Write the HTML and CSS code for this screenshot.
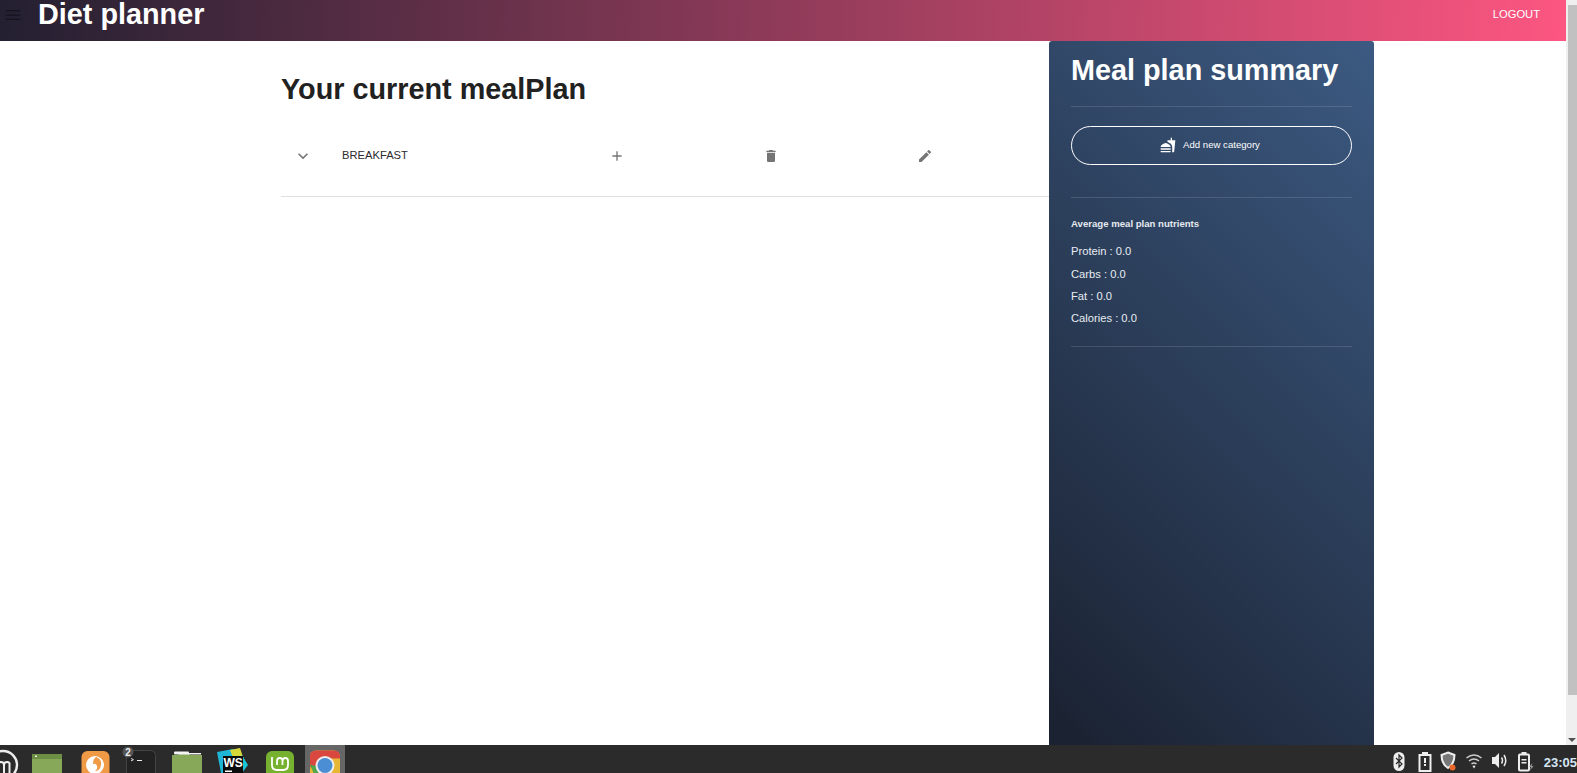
FILE: index.html
```html
<!DOCTYPE html>
<html lang="en">
<head>
    <meta charset="UTF-8">
    <title>Diet planner</title>
    <link rel="stylesheet" href="styles.css">
</head>
<body>

    <div class="window">
        <div class="page">
            <header class="app-bar">
                <svg class="menu-icon" viewBox="0 0 24 24"><path d="M3 18h18v-1.500H3V18zm0-5.250h18v-1.500H3v1.500zM3 6v1.500h18V6H3z"/></svg>
                <h1 class="app-title">Diet planner</h1>
                <span class="logout">LOGOUT</span>
            </header>

            <div class="content">
                <main class="plan">
                    <h2 class="plan-title">Your current mealPlan</h2>
                    <div class="category-row">
                        <svg class="row-icon chevron" viewBox="0 0 24 24"><path d="M16.59 8.59L12 13.17 7.41 8.59 6 10l6 6 6-6z"/></svg>
                        <span class="category-name">BREAKFAST</span>
                        <span class="action"><svg class="row-icon" viewBox="0 0 24 24"><path d="M19 13h-6v6h-2v-6H5v-2h6V5h2v6h6v2z"/></svg></span>
                        <span class="action"><svg class="row-icon" viewBox="0 0 24 24"><path d="M6 19c0 1.100.9 2 2 2h8c1.100 0 2-.9 2-2V7H6v12zM19 4h-3.500l-1-1h-5l-1 1H5v2h14V4z"/></svg></span>
                        <span class="action"><svg class="row-icon" viewBox="0 0 24 24"><path d="M3 17.250V21h3.750L17.810 9.940l-3.750-3.750L3 17.250zM20.710 7.040c.39-.39.39-1.020 0-1.410l-2.340-2.340c-.39-.39-1.020-.39-1.410 0l-1.830 1.830 3.750 3.750 1.830-1.830z"/></svg></span>
                    </div>
                </main>

                <aside class="summary">
                    <h2 class="summary-title">Meal plan summary</h2>
                    <hr class="divider">
                    <button class="add-btn">
                        <svg class="add-icon" viewBox="0 0 24 24"><path d="M18.060 22.990h1.660c.84 0 1.530-.64 1.630-1.460L23 5.050h-5V1h-1.970v4.050h-4.970l.3 2.340c1.710.47 3.310 1.320 4.340 2.330 1.540 1.520 2.600 3.090 2.600 5.650v8.620zM1 21.990V21h15.030v.99c0 .56-.45 1.010-1.020 1.010H2.010c-.56 0-1.010-.45-1.010-1.010zm15.030-7c0-4-7.520-6-7.520-6S1 11 1 15h15.030zM1.020 17h15v2h-15z"/></svg>
                        Add new category
                    </button>
                    <hr class="divider divider-btn">
                    <h3 class="nutrients-title">Average meal plan nutrients</h3>
                    <p class="nutrient first">Protein : 0.0</p>
                    <p class="nutrient">Carbs : 0.0</p>
                    <p class="nutrient">Fat : 0.0</p>
                    <p class="nutrient">Calories : 0.0</p>
                    <hr class="divider divider-end">
                </aside>
            </div>
        </div>

        <div class="scrollbar">
            <div class="thumb"></div>
            <div class="arrow"></div>
        </div>
    </div>

    <footer class="taskbar">
        <div class="launchers">
            <span class="launcher mint-menu">
                <svg viewBox="0 0 40 28"><circle cx="3" cy="20" r="14" fill="none" stroke="#eee" stroke-width="2.400"/><path d="M-2 28v-8q0-3 3-3t3 3v8M4 20q0-3 3-3t2.500 3v8" fill="none" stroke="#eee" stroke-width="2"/></svg>
            </span>
            <span class="launcher">
                <svg viewBox="0 0 46 28"><rect x="8" y="9" width="30" height="19" fill="#87a858"/><rect x="8" y="9" width="30" height="5" fill="#6d8f45"/><rect x="11" y="10.500" width="2" height="1.500" fill="#e8eedd"/></svg>
            </span>
            <span class="launcher">
                <svg viewBox="0 0 46 28"><rect x="10.500" y="6" width="28" height="28" rx="6" fill="#f19a46"/><circle cx="24" cy="20" r="9" fill="#fff"/><path d="M25 12q6 2 5 8t-6 6q3-2 2-5t-4-2q0-5 3-7z" fill="#f19a46"/></svg>
            </span>
            <span class="launcher">
                <svg viewBox="0 0 46 28"><rect x="9.500" y="5.500" width="29" height="28" rx="5" fill="#222" stroke="#444"/><path d="M14 13.500l2.500 1.200-2.500 1.200" fill="none" stroke="#ddd"/><rect x="20" y="15" width="5" height="1" fill="#eee"/><circle cx="11" cy="7" r="5.500" fill="#555"/><text class="badge-num" x="11" y="10.500">2</text></svg>
            </span>
            <span class="launcher">
                <svg viewBox="0 0 46 28"><path d="M8 10h6l2-2h8l2 2h12v18H8z" fill="#87a858"/><rect x="10" y="6.500" width="15" height="3" rx="1" fill="#f4f4f4"/><rect x="24" y="8" width="13" height="1.500" fill="#f4f4f4"/></svg>
            </span>
            <span class="launcher">
                <svg viewBox="0 0 46 28"><path d="M7 7l16-3 4 6-4 18H11z" fill="#1fb5d6"/><path d="M20 5l10-2 4 12-9 3z" fill="#d6d83a"/><path d="M32 10l6 10-6 8H20z" fill="#19c3d8"/><rect x="13" y="11" width="20" height="19" fill="#0b0b0b"/><text class="ws-text" x="13.500" y="22">WS</text><rect x="15" y="25.500" width="7" height="1.500" fill="#fff"/></svg>
            </span>
            <span class="launcher">
                <svg viewBox="0 0 46 28"><rect x="9" y="6" width="28" height="28" rx="6" fill="#76b22f"/><path d="M15 12v8q0 5 5 5h6q5 0 5-5v-4q0-3-2.700-3t-2.800 3v4M25.500 16q0-3-2.700-3t-2.800 3v4" fill="none" stroke="#fff" stroke-width="1.800"/></svg>
            </span>
            <span class="launcher active">
                <svg viewBox="0 0 40 27"><rect x="5" y="5" width="30" height="28" rx="6" fill="#e8b834"/><path d="M5 11q0-6 6-6h18q6 0 6 6v2H20l-9 14-6-6z" fill="#d9473f"/><path d="M5 19l6 14h12l-3-10z" fill="#4fa64c"/><circle cx="20" cy="20" r="9.500" fill="#eee"/><circle cx="20" cy="20" r="7.500" fill="#4b8ed4"/></svg>
            </span>
        </div>

        <div class="tray">
            <svg class="tray-icon" viewBox="0 0 16 22"><rect x="2.500" y="2" width="11" height="19" rx="5.500" fill="#eee"/><path d="M5 8l6 6-3 3V5l3 3-6 6" fill="none" stroke="#2a2a2a" stroke-width="1.200"/></svg>
            <svg class="tray-icon clipboard" viewBox="0 0 16 22"><rect x="2.500" y="5" width="11" height="16" fill="none" stroke="#eee" stroke-width="2"/><rect x="5" y="2" width="6" height="4" fill="#eee"/><rect x="7" y="8" width="2" height="5" fill="#eee"/><rect x="7" y="14" width="2" height="2" fill="#eee"/></svg>
            <svg class="tray-icon" viewBox="0 0 16 22"><path d="M8 2.500l6.500 2.500q0 9-6.500 13-6.500-4-6.500-13z" fill="#777" stroke="#eee" stroke-width="2"/><circle cx="12.500" cy="17.500" r="3" fill="#e9682a"/></svg>
            <svg class="tray-icon" viewBox="0 0 16 22"><path d="M.5 8q7.500-6 15 0M3 11q5-4 10 0M5.500 14q2.500-2 5 0" fill="none" stroke="#ccc" stroke-width="1.600"/><path d="M6.500 16q1.500-1 3 0L8 18.500z" fill="#eee"/></svg>
            <svg class="tray-icon" viewBox="0 0 16 22"><path d="M0 7h3l4-4v15l-4-4H0z" fill="#eee"/><path d="M9.500 7.500q2 3 0 6M12 5q3.500 5.500 0 11" fill="none" stroke="#eee" stroke-width="1.500"/></svg>
            <svg class="tray-icon" viewBox="0 0 16 22"><rect x="1" y="4.500" width="10" height="16" rx="1" fill="none" stroke="#eee" stroke-width="2"/><rect x="3.500" y="2" width="5" height="3" fill="#eee"/><rect x="3.500" y="9" width="5" height="1.500" fill="#eee"/><rect x="3.500" y="12" width="5" height="1.500" fill="#eee"/><path d="M14.500 13l-3.500 4h2l-1 3.500 3.500-4.500h-2z" fill="#999"/></svg>
            <span class="clock">23:05</span>
        </div>
    </footer>

</body>
</html>
```

FILE: styles.css
```css
html, body {
    height: 100%;
    margin: 0;
    overflow: hidden;
}
body {
    display: flex;
    flex-direction: column;
    font-family: "Liberation Sans", Arial, sans-serif;
    background-color: white;
}

.window {
    flex: 1;
    display: flex;
    min-height: 0;
}
.page {
    flex: 1;
    display: flex;
    flex-direction: column;
    min-width: 0;
}

/* top bar */
.app-bar {
    height: 41px;
    flex-shrink: 0;
    display: flex;
    align-items: flex-start;
    background: linear-gradient(92deg, #232031 0%, #fc5681 100%);
}
.menu-icon {
    width: 20px;
    height: 20px;
    margin: 5px 0 0 3px;
    fill: #15131e;
}
.app-title {
    margin: 0 0 0 15px;
    font-size: 28.8px;
    line-height: 29px;
    color: white;
}
.logout {
    margin: 7px 26px 0 auto;
    font-size: 11.2px;
    line-height: 14px;
    color: white;
}

/* main area */
.content {
    flex: 1;
    display: flex;
    min-height: 0;
    padding: 0 192px 0 281px;
}
.plan {
    flex: 1;
    min-width: 0;
}
.plan-title {
    margin: 31px 0 0;
    font-size: 28.8px;
    line-height: 34px;
    color: #212121;
}
.category-row {
    display: flex;
    align-items: center;
    height: 80px;
    margin-top: 10px;
    border-bottom: 1px solid #e0e0e0;
}
.row-icon {
    display: block;
    width: 16px;
    height: 16px;
    fill: #757575;
}
.chevron {
    flex-shrink: 0;
    width: 20px;
    height: 20px;
    margin-left: 12px;
}
.category-name {
    flex-shrink: 0;
    width: 267px;
    margin: -3px 0 0 29px;
    font-size: 11.2px;
    color: #2b2b2b;
}
.action {
    flex-shrink: 0;
    width: 154px;
}

/* summary panel */
.summary {
    width: 281px;
    height: 100%;
    padding: 0 22px;
    border-radius: 3px 3px 0 0;
    background: linear-gradient(45deg, #1a2130 0%, #3c5a82 100%);
    color: white;
}
.summary-title {
    margin: 11px 0 0;
    font-size: 28.8px;
    line-height: 36px;
}
.divider {
    margin: 18px 0 0;
    border: none;
    border-top: 1px solid rgba(255,255,255,0.13);
}
.add-btn {
    display: flex;
    align-items: center;
    justify-content: center;
    gap: 7px;
    width: 100%;
    height: 39px;
    margin-top: 19px;
    padding: 0 3px 2px 0;
    border: 1px solid white;
    border-radius: 20px;
    background: none;
    color: white;
    font-family: inherit;
    font-size: 9.6px;
}
.add-icon {
    width: 16px;
    height: 16px;
    fill: white;
}
.divider-btn {
    margin-top: 32px;
}
.nutrients-title {
    margin: 20px 0 0;
    font-size: 9.6px;
    line-height: 12px;
    color: #e6eaf0;
}
.nutrient {
    margin: 8px 0 0;
    font-size: 11.2px;
    line-height: 14px;
    color: #e8ecf2;
}
.nutrient.first {
    margin: 14px 0 9px;
}
.divider-end {
    margin-top: 21px;
}

/* browser scrollbar */
.scrollbar {
    width: 11px;
    display: flex;
    flex-direction: column;
    align-items: flex-end;
    background-color: #efefef;
}
.thumb {
    width: 9px;
    height: 690px;
    margin-top: 5px;
    background-color: #c1c1c1;
}
.arrow {
    margin: auto 1px 3px 0;
    border-left: 4px solid transparent;
    border-right: 4px solid transparent;
    border-top: 4px solid #505050;
}

/* desktop panel */
.taskbar {
    height: 28px;
    flex-shrink: 0;
    display: flex;
    justify-content: space-between;
    background-color: #2b2b2b;
    overflow: hidden;
}
.launchers {
    display: flex;
}
.launcher {
    width: 46.5px;
    height: 28px;
}
.launcher svg {
    display: block;
    width: 46px;
    height: 28px;
}
.launcher.mint-menu {
    width: 24px;
}
.launcher.mint-menu svg {
    width: 40px;
}
.launcher.active {
    width: 40px;
    margin-left: 2px;
    background-color: #666;
}
.launcher.active svg {
    width: 40px;
}
.badge-num {
    font-size: 10px;
    font-weight: bold;
    fill: #eee;
    text-anchor: middle;
}
.ws-text {
    font-size: 12px;
    font-weight: bold;
    fill: white;
}
.tray {
    display: flex;
    align-items: center;
    gap: 10px;
}
.tray-icon {
    width: 16px;
    height: 22px;
    margin-top: 3px;
}
.clipboard {
    margin-right: -3px;
}
.clock {
    margin-top: 7px;
    font-size: 13px;
    font-weight: bold;
    color: #d6e6f5;
}
```
